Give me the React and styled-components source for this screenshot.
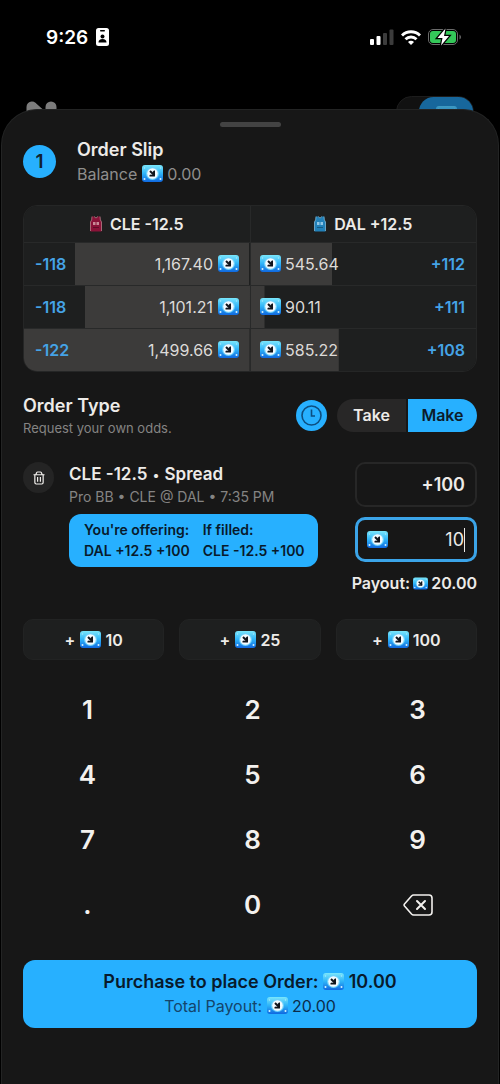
import React, { useState } from 'react';
import styled, { createGlobalStyle } from 'styled-components';

const App = () => {
  const [stake, setStake] = useState('10');

  const amount = Number(stake) || 0;
  const payout = (amount * 2).toFixed(2);

  const pressKey = key => {
    setStake(key === 'delete' ? stake.slice(0, -1) : stake + key);
  };

  return (
    <>
      <GlobalStyle />
      <Screen>
        <StatusBar>
          <Clock>
            9:26
            <BadgeIcon />
          </Clock>
          <StatusIcons>
            <SignalIcon />
            <WifiIcon />
            <BatteryIcon />
          </StatusIcons>
        </StatusBar>
        <AppBar>
          <LogoIcon />
          <AppToggle>
            <AppToggleOn>
              <CoinIcon />
            </AppToggleOn>
          </AppToggle>
        </AppBar>

        <Sheet>
          <Handle />
          <SlipHeader>
            <SlipCount>1</SlipCount>
            <div>
              <Title>Order Slip</Title>
              <Balance>
                Balance <CoinIcon /> 0.00
              </Balance>
            </div>
          </SlipHeader>

          <BookFrame>
            <Book>
              <thead>
                <tr>
                  <th scope="col">
                    <Team>
                      <JerseyIcon main="#8a1238" trim="#c98a97" /> CLE -12.5
                    </Team>
                  </th>
                  <th scope="col">
                    <Team>
                      <JerseyIcon main="#2180b8" trim="#8fc6e6" /> DAL +12.5
                    </Team>
                  </th>
                </tr>
              </thead>
              <tbody>
                {bookRows.map(({ id, bid, ask }) => (
                  <tr key={id}>
                    <DepthCell $side="left" $depth={bid.depth}>
                      <Level>
                        <Odds>{bid.odds}</Odds>
                        <Volume>
                          {bid.volume} <CoinIcon />
                        </Volume>
                      </Level>
                    </DepthCell>
                    <DepthCell $side="right" $depth={ask.depth}>
                      <Level>
                        <Volume>
                          <CoinIcon /> {ask.volume}
                        </Volume>
                        <Odds>{ask.odds}</Odds>
                      </Level>
                    </DepthCell>
                  </tr>
                ))}
              </tbody>
            </Book>
          </BookFrame>

          <OrderType>
            <div>
              <Title>Order Type</Title>
              <Note $small>Request your own odds.</Note>
            </div>
            <OrderControls>
              <ExpiryButton type="button" aria-label="Order expiry">
                <ClockIcon />
              </ExpiryButton>
              <Segment>
                <SegmentButton type="button">Take</SegmentButton>
                <SegmentButton type="button" $active>
                  Make
                </SegmentButton>
              </Segment>
            </OrderControls>
          </OrderType>

          <Leg>
            <RemoveButton type="button" aria-label="Remove">
              <TrashIcon />
            </RemoveButton>
            <LegInfo>
              <LegTitle>
                CLE -12.5 <Dot>•</Dot> Spread
              </LegTitle>
              <Note>Pro BB • CLE @ DAL • 7:35 PM</Note>
              <Offer>
                <div>
                  <p>You're offering:</p>
                  <p>DAL +12.5 +100</p>
                </div>
                <div>
                  <p>If filled:</p>
                  <p>CLE -12.5 +100</p>
                </div>
              </Offer>
            </LegInfo>
            <LegInputs>
              <Field>
                <FieldInput aria-label="Odds" defaultValue="+100" $bold />
              </Field>
              <Field $focused>
                <CoinIcon />
                <FieldInput
                  aria-label="Amount"
                  value={stake}
                  onChange={e => setStake(e.target.value)}
                />
                <Caret />
              </Field>
              <Payout>
                Payout:
                <CoinIcon small />
                {payout}
              </Payout>
            </LegInputs>
          </Leg>

          <QuickAdd>
            {quickAmounts.map(value => (
              <QuickButton
                key={value}
                type="button"
                onClick={() => setStake(String(amount + value))}
              >
                <Plus>+</Plus>
                <CoinIcon /> {value}
              </QuickButton>
            ))}
          </QuickAdd>

          <Keypad>
            {keys.map(key => (
              <Key key={key} type="button" onClick={() => pressKey(key)}>
                {key}
              </Key>
            ))}
            <Key
              type="button"
              aria-label="Delete"
              onClick={() => pressKey('delete')}
            >
              <DeleteIcon />
            </Key>
          </Keypad>

          <PurchaseButton type="button">
            <PurchaseTitle>
              Purchase to place Order: <CoinIcon /> {amount.toFixed(2)}
            </PurchaseTitle>
            <PurchaseNote>
              Total Payout: <CoinIcon /> <b>{payout}</b>
            </PurchaseNote>
          </PurchaseButton>
        </Sheet>
      </Screen>
    </>
  );
};

export default App;

const bookRows = [
  {
    id: 1,
    bid: { odds: '-118', volume: '1,167.40', depth: 77 },
    ask: { odds: '+112', volume: '545.64', depth: 36 },
  },
  {
    id: 2,
    bid: { odds: '-118', volume: '1,101.21', depth: 73 },
    ask: { odds: '+111', volume: '90.11', depth: 6 },
  },
  {
    id: 3,
    bid: { odds: '-122', volume: '1,499.66', depth: 100 },
    ask: { odds: '+108', volume: '585.22', depth: 39 },
  },
];

const quickAmounts = [10, 25, 100];

const keys = ['1', '2', '3', '4', '5', '6', '7', '8', '9', '.', '0'];

const CoinIcon = ({ small }) => (
  <Coin viewBox="0 0 42 34" $small={small} aria-hidden="true">
    <defs>
      <linearGradient id="coin" x1="0" y1="0" x2="0" y2="1">
        <stop offset="0" stopColor="#7ae6fb" />
        <stop offset="0.5" stopColor="#2fb4f8" />
        <stop offset="1" stopColor="#0f68e0" />
      </linearGradient>
    </defs>
    <rect width="42" height="34" rx="6" fill="url(#coin)" />
    <circle cx="21" cy="17" r="13" fill="#6fd2fb" />
    <circle cx="21" cy="17" r="10.5" fill="#f4fbff" />
    <path d="M16 12l9 9" fill="none" stroke="#10141c" strokeWidth="4" />
    <path d="M26 11v12H15v-3l3-1 3 1 1-2-1-4 3-3z" fill="#10141c" />
    <g fill="#d6f3ff">
      <circle cx="5" cy="28" r="2" />
      <circle cx="37" cy="28" r="2" />
      <circle cx="5" cy="6" r="1.5" opacity="0.6" />
      <circle cx="37" cy="6" r="1.5" opacity="0.6" />
    </g>
  </Coin>
);

const JerseyIcon = ({ main, trim }) => (
  <svg width="12" height="16" viewBox="0 0 12 16" aria-hidden="true">
    <path
      d="M2 0.5h2q2 3 4 0h2q0 4 1.500 5.500V15.500H0.500V6Q2 4.500 2 0.500z"
      fill={main}
    />
    <path
      d="M2 0.500q0 4-1.500 5.500V15M10 0.500q0 4 1.500 5.500V15M4 0.500q2 3 4 0"
      fill="none"
      stroke={trim}
      strokeOpacity="0.7"
    />
    <path d="M3 6h2.500v3H3zM6.500 6H9v3H6.500z" fill={trim} />
    <path d="M3 11.500h6" stroke="#000" strokeOpacity="0.3" />
  </svg>
);

const BadgeIcon = () => (
  <svg width="13" height="18" viewBox="0 0 13 18" aria-hidden="true">
    <rect width="13" height="18" rx="2.500" fill="#fff" />
    <rect x="4" y="2" width="5" height="1.500" rx="0.700" fill="#000" />
    <circle cx="6.500" cy="8.500" r="2" fill="#000" />
    <path d="M2.500 14.500q0-3.500 4-3.500t4 3.500z" fill="#000" />
  </svg>
);

const SignalIcon = () => (
  <svg width="24" height="16" viewBox="0 0 24 16" aria-hidden="true">
    <rect y="10" width="4" height="6" rx="1" fill="#fff" />
    <rect x="6.500" y="7" width="4" height="9" rx="1" fill="#fff" />
    <rect x="13" y="4" width="4" height="12" rx="1" fill="#3c3c3c" />
    <rect x="19.500" y="0.500" width="4" height="15.500" rx="1" fill="#3c3c3c" />
  </svg>
);

const WifiIcon = () => (
  <svg width="20" height="15" viewBox="0 0 20 15" aria-hidden="true">
    <g fill="none" stroke="#fff" strokeWidth="2.900">
      <path d="M1 5.500a12.700 12.700 0 0 1 18 0" />
      <path d="M4.500 9.200a7.800 7.800 0 0 1 11 0" />
    </g>
    <path d="M10 15l-3-3a4.200 4.200 0 0 1 6 0z" fill="#fff" />
  </svg>
);

const BatteryIcon = () => (
  <svg width="34" height="18" viewBox="0 0 34 18" aria-hidden="true">
    <rect
      x="0.500"
      y="1.500"
      width="29"
      height="15"
      rx="4.500"
      fill="none"
      stroke="#6b6b6b"
    />
    <rect x="2" y="3" width="26" height="12" rx="3" fill="#34c759" />
    <path d="M31.500 6.500q1.500 1 1.500 2.500t-1.500 2.500z" fill="#6b6b6b" />
    <path
      d="M17.500 0.500L9.500 10h5l-1.500 7.500 8-9.500h-5z"
      fill="#fff"
      stroke="#000"
      strokeWidth="2.500"
      paintOrder="stroke"
    />
  </svg>
);

const LogoIcon = () => (
  <svg width="32" height="26" viewBox="0 0 32 26" aria-hidden="true">
    <g stroke="#7c7c7c" strokeWidth="11" strokeLinecap="round">
      <path d="M6 6l18 16M6 6v14M25 6v14" />
    </g>
  </svg>
);

const ClockIcon = () => (
  <svg width="21" height="21" viewBox="0 0 21 21" aria-hidden="true">
    <g fill="none" stroke="#0d4e80" strokeWidth="1.600">
      <circle cx="10.500" cy="10.500" r="9.500" />
      <path d="M10.500 4.500v6.500h3.500" />
    </g>
  </svg>
);

const TrashIcon = () => (
  <svg width="12" height="14" viewBox="0 0 13 15" aria-hidden="true">
    <g fill="none" stroke="#f0eeeb" strokeWidth="1.300">
      <path d="M0.500 4h12M3 4l1-2.500q0.300-0.500 1-0.500h3q0.700 0 1 0.500L10 4" />
      <path d="M2 4v8.500q0 1.500 1.500 1.500h6q1.500 0 1.500-1.500V4" />
      <path d="M5 6.500v5M8 6.500v5" />
    </g>
  </svg>
);

const DeleteIcon = () => (
  <svg width="30" height="22" viewBox="0 0 30 22" aria-hidden="true">
    <g
      fill="none"
      stroke="#f3f1ee"
      strokeWidth="1.600"
      strokeLinejoin="round"
      strokeLinecap="round"
    >
      <path d="M10.500 1H26q3 0 3 3v14q0 3-3 3H10.500Q9.500 21 8.500 20L1.500 12q-0.800-1 0-2L8.500 2Q9.500 1 10.500 1z" />
      <path d="M14 7l8 8M22 7l-8 8" strokeWidth="2" />
    </g>
  </svg>
);

const GlobalStyle = createGlobalStyle`
  * {
    box-sizing: border-box;
  }

  body {
    margin: 0;
    background-color: #000;
    color: #edebe8;
    font-family: Inter, 'Liberation Sans', sans-serif;
  }

  h1,
  h2,
  h3,
  p {
    margin: 0;
  }

  button,
  input {
    padding: 0;
    border: 0;
    background: none;
    color: inherit;
    font: inherit;
  }
`;

const Screen = styled.main`
  display: flex;
  flex-direction: column;
  min-height: 100vh;
  overflow-x: hidden;
`;

const StatusBar = styled.header`
  display: flex;
  align-items: center;
  justify-content: space-between;
  height: 74px;
  padding: 0 38px 0 46px;
  color: white;
`;

const Clock = styled.div`
  display: flex;
  align-items: center;
  gap: 8px;
  font-size: 19px;
  font-weight: 600;
`;

const StatusIcons = styled.div`
  display: flex;
  align-items: center;
  gap: 7px;
`;

const AppBar = styled.div`
  display: flex;
  align-items: flex-end;
  justify-content: space-between;
  height: 53px;
  padding: 0 26px;
`;

const AppToggle = styled.div`
  display: flex;
  justify-content: flex-end;
  width: 78px;
  height: 31px;
  border: 1px solid #1c1c1c;
  border-radius: 16px;
  background-color: #111;
`;

const AppToggleOn = styled.div`
  display: flex;
  justify-content: center;
  width: 54px;
  padding-top: 9px;
  border-radius: 16px;
  background-color: #17679c;

  svg {
    opacity: 0.4;
  }
`;

const Sheet = styled.section`
  position: relative;
  display: flex;
  flex: 1;
  flex-direction: column;
  margin: -18px 1px 0;
  padding: 12px 21px 40px;
  border: 1px solid #232424;
  border-bottom: 0;
  border-radius: 36px 36px 0 0;
  background-color: #171717;
`;

const Handle = styled.div`
  align-self: center;
  width: 61px;
  height: 5px;
  border-radius: 3px;
  background-color: #434343;
`;

const SlipHeader = styled.div`
  display: flex;
  align-items: center;
  gap: 21px;
  margin-top: 10px;
`;

const SlipCount = styled.span`
  width: 33px;
  border-radius: 50%;
  background-color: #27b0ff;
  color: #10222f;
  font-size: 19px;
  font-weight: 600;
  line-height: 33px;
  text-align: center;
`;

const Title = styled.h2`
  font-size: 18px;
  font-weight: 600;
  line-height: 26px;
`;

const Balance = styled.p`
  color: #8f8e8d;
  font-size: 16px;
  line-height: 22px;
`;

const Note = styled.p`
  color: #858483;
  font-size: ${({ $small }) => ($small ? 13 : 14)}px;
  line-height: 18px;
  white-space: nowrap;
`;

const Coin = styled.svg`
  width: ${({ $small }) => ($small ? 15 : 21)}px;
  height: ${({ $small }) => ($small ? 13 : 17)}px;
  vertical-align: -2px;
`;

const BookFrame = styled.div`
  margin-top: 20px;
  border: 1px solid #252626;
  border-radius: 14px;
  overflow: hidden;
`;

const Book = styled.table`
  width: 100%;
  table-layout: fixed;
  border-collapse: collapse;
  background-color: #1e1f1f;

  th {
    height: 36px;
    padding: 0;
    font-size: 16px;
    font-weight: 600;
  }

  td {
    height: 43px;
    border-top: 1px solid #282929;
  }

  th + th,
  td + td {
    border-left: 1px solid #282929;
  }
`;

const Team = styled.div`
  display: flex;
  align-items: center;
  justify-content: center;
  gap: 8px;
`;

const DepthCell = styled.td`
  padding: ${({ $side }) => ($side === 'left' ? '0 11px' : '0 11px 0 9px')};
  background: linear-gradient(#3c3b3a, #3c3b3a) no-repeat
    ${({ $side }) => ($side === 'left' ? 'right' : 'left')} /
    ${({ $depth }) => $depth}% 100%;
`;

const Level = styled.div`
  display: flex;
  justify-content: space-between;
  font-size: 16px;
`;

const Odds = styled.span`
  color: #45a3e6;
  font-weight: 600;
`;

const Volume = styled.span`
  color: #dcdad8;
  white-space: nowrap;
`;

const OrderType = styled.div`
  display: flex;
  align-items: center;
  justify-content: space-between;
  margin-top: 21px;
`;

const OrderControls = styled.div`
  display: flex;
  align-items: center;
  gap: 10px;
`;

const ExpiryButton = styled.button`
  display: flex;
  align-items: center;
  justify-content: center;
  width: 31px;
  height: 31px;
  border-radius: 50%;
  background-color: #27b0ff;
`;

const Segment = styled.div`
  display: flex;
  gap: 2px;
  border-radius: 17px;
  overflow: hidden;
`;

const SegmentButton = styled.button`
  width: 69px;
  height: 33px;
  background-color: ${({ $active }) => ($active ? '#27b0ff' : '#282727')};
  color: ${({ $active }) => ($active ? '#0c1c2b' : '#edebe8')};
  font-size: 16px;
  font-weight: 600;
`;

const Leg = styled.article`
  display: flex;
  align-items: flex-start;
  gap: 15px;
  margin-top: 25px;
`;

const RemoveButton = styled.button`
  display: flex;
  flex-shrink: 0;
  align-items: center;
  justify-content: center;
  width: 31px;
  height: 31px;
  border-radius: 50%;
  background-color: #242424;
`;

const LegInfo = styled.div`
  display: flex;
  flex: 1;
  flex-direction: column;
  align-items: flex-start;
`;

const LegTitle = styled.h3`
  font-size: 17px;
  font-weight: 600;
  line-height: 25px;
`;

const Dot = styled.span`
  margin: 0 1px;
  font-size: 13px;
`;

const Offer = styled.div`
  display: flex;
  gap: 13px;
  margin-top: 8px;
  padding: 5px 13px 6px 15px;
  border-radius: 12px;
  background-color: #27b0ff;
  color: #081a2c;
  font-size: 14px;
  font-weight: 600;
  line-height: 21px;
  white-space: nowrap;
`;

const LegInputs = styled.div`
  display: flex;
  flex-direction: column;
  align-items: flex-end;
  width: 125px;
  margin-left: auto;
`;

const Field = styled.div`
  display: flex;
  align-items: center;
  width: 122px;
  height: 45px;
  margin-bottom: 10px;
  padding: 0 ${({ $focused }) => ($focused ? 9 : 10)}px;
  border: ${({ $focused }) => ($focused ? '3px solid #3ba4e8' : '2px solid #272727')};
  border-radius: 10px;
`;

const FieldInput = styled.input`
  flex: 1;
  min-width: 0;
  outline: none;
  caret-color: transparent;
  font-size: 18px;
  font-weight: ${({ $bold }) => ($bold ? 600 : 400)};
  text-align: right;
`;

const Caret = styled.span`
  width: 1px;
  height: 24px;
  background-color: #edebe8;
`;

const Payout = styled.p`
  display: flex;
  align-items: center;
  gap: 3px;
  font-size: 16px;
  font-weight: 600;
  line-height: 22px;
  white-space: nowrap;
`;

const QuickAdd = styled.div`
  display: grid;
  grid-template-columns: repeat(3, 1fr);
  gap: 15px;
  margin-top: 25px;
`;

const QuickButton = styled.button`
  height: 41px;
  border: 1px solid #222323;
  border-radius: 10px;
  background-color: #1e1f1f;
  font-size: 16px;
  font-weight: 600;
`;

const Plus = styled.span`
  margin-right: 5px;
`;

const Keypad = styled.div`
  display: grid;
  grid-template-columns: repeat(3, 1fr);
  margin: 17px -23px 0 -18px;
`;

const Key = styled.button`
  display: flex;
  align-items: center;
  justify-content: center;
  height: 65px;
  color: #f3f1ee;
  font-size: 26px;
  font-weight: 600;
`;

const PurchaseButton = styled.button`
  margin-top: 23px;
  padding: 10px;
  border-radius: 12px;
  background-color: #27b0ff;
  color: #081a2c;
`;

const PurchaseTitle = styled.span`
  display: block;
  font-size: 18px;
  font-weight: 600;
  line-height: 24px;
`;

const PurchaseNote = styled.span`
  display: block;
  color: #14456b;
  font-size: 16px;
  line-height: 24px;

  b {
    color: #0b2c4a;
    font-weight: 400;
  }
`;
